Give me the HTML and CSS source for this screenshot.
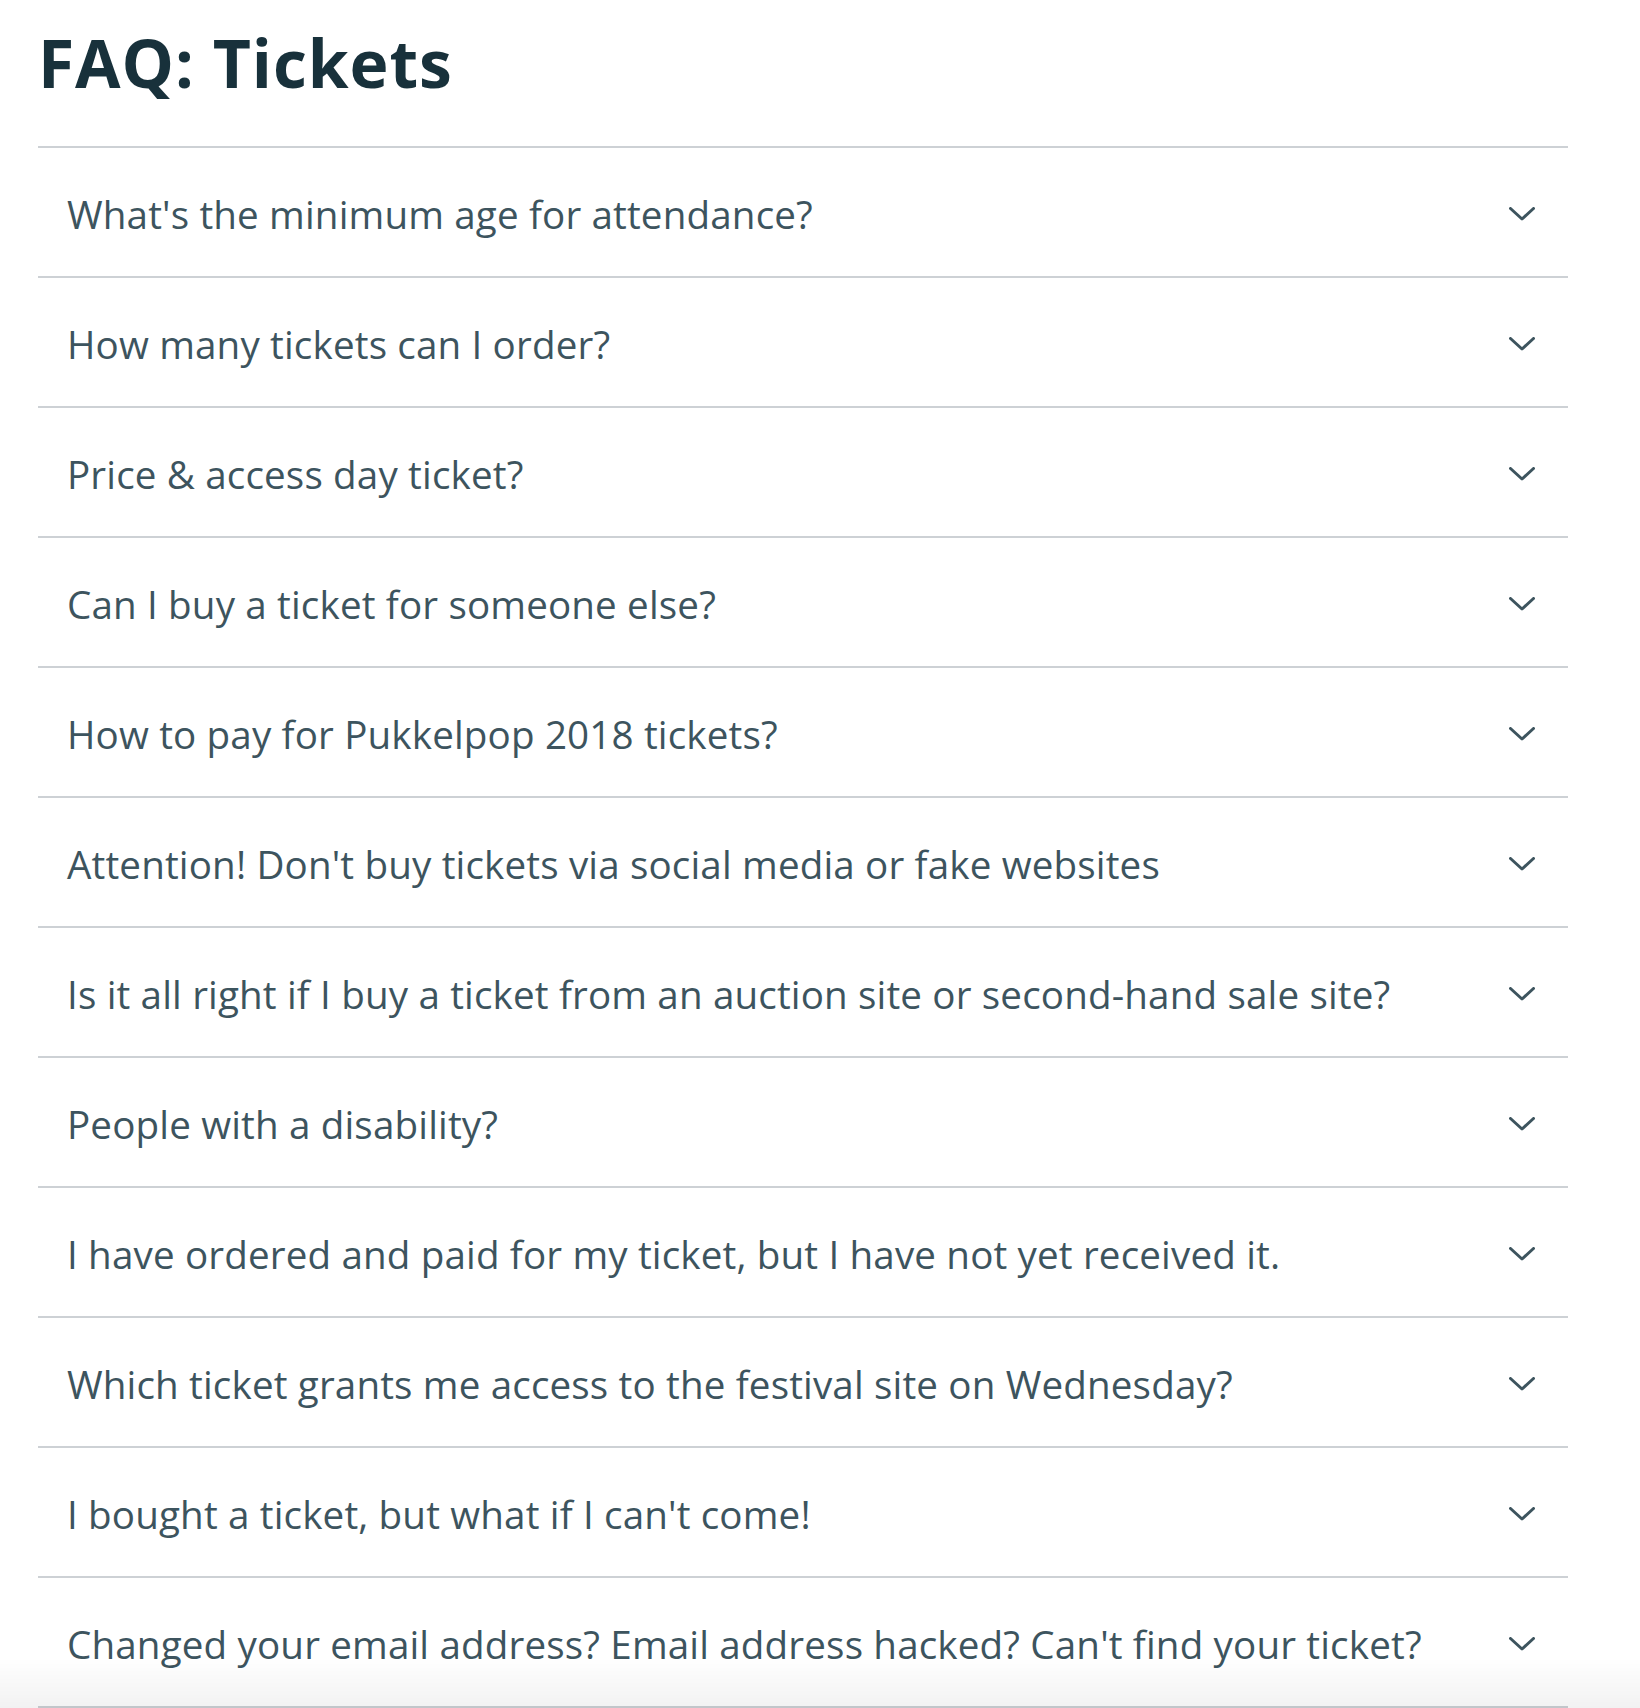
FILE: index.html
```html
<!DOCTYPE html>
<html lang="en">
<head>
<meta charset="utf-8">
<title>FAQ: Tickets</title>
<link rel="stylesheet" href="styles.css">
</head>
<body>
<main class="page">
  <h1 class="title">FAQ: Tickets</h1>
  <ul class="faq">
    <li class="item"><span class="q">What's the minimum age for attendance?</span><svg class="chev" viewBox="0 0 26 14"><path d="M1.5 1.5 L13 12 L24.5 1.5"/></svg></li>
    <li class="item"><span class="q">How many tickets can I order?</span><svg class="chev" viewBox="0 0 26 14"><path d="M1.5 1.5 L13 12 L24.5 1.5"/></svg></li>
    <li class="item"><span class="q">Price &amp; access day ticket?</span><svg class="chev" viewBox="0 0 26 14"><path d="M1.5 1.5 L13 12 L24.5 1.5"/></svg></li>
    <li class="item"><span class="q">Can I buy a ticket for someone else?</span><svg class="chev" viewBox="0 0 26 14"><path d="M1.5 1.5 L13 12 L24.5 1.5"/></svg></li>
    <li class="item"><span class="q">How to pay for Pukkelpop 2018 tickets?</span><svg class="chev" viewBox="0 0 26 14"><path d="M1.5 1.5 L13 12 L24.5 1.5"/></svg></li>
    <li class="item"><span class="q">Attention! Don't buy tickets via social media or fake websites</span><svg class="chev" viewBox="0 0 26 14"><path d="M1.5 1.5 L13 12 L24.5 1.5"/></svg></li>
    <li class="item"><span class="q">Is it all right if I buy a ticket from an auction site or second-hand sale site?</span><svg class="chev" viewBox="0 0 26 14"><path d="M1.5 1.5 L13 12 L24.5 1.5"/></svg></li>
    <li class="item"><span class="q">People with a disability?</span><svg class="chev" viewBox="0 0 26 14"><path d="M1.5 1.5 L13 12 L24.5 1.5"/></svg></li>
    <li class="item"><span class="q">I have ordered and paid for my ticket, but I have not yet received it.</span><svg class="chev" viewBox="0 0 26 14"><path d="M1.5 1.5 L13 12 L24.5 1.5"/></svg></li>
    <li class="item"><span class="q">Which ticket grants me access to the festival site on Wednesday?</span><svg class="chev" viewBox="0 0 26 14"><path d="M1.5 1.5 L13 12 L24.5 1.5"/></svg></li>
    <li class="item"><span class="q">I bought a ticket, but what if I can't come!</span><svg class="chev" viewBox="0 0 26 14"><path d="M1.5 1.5 L13 12 L24.5 1.5"/></svg></li>
    <li class="item"><span class="q">Changed your email address? Email address hacked? Can't find your ticket?</span><svg class="chev" viewBox="0 0 26 14"><path d="M1.5 1.5 L13 12 L24.5 1.5"/></svg></li>
  </ul>
</main>
<div class="fade"></div>
</body>
</html>
```
FILE: styles.css
```css
html, body {
  margin: 0;
  padding: 0;
  background: #ffffff;
}
body {
  font-family: "Open Sans", "Noto Sans", sans-serif;
  overflow: hidden;
}
.page {
  width: 1530px;
  padding-left: 38px;
}
.title {
  margin: 0;
  padding-top: 29px;
  height: 146px;
  box-sizing: border-box;
  font-size: 66px;
  line-height: 1;
  font-weight: 700;
  color: #18313b;
  letter-spacing: 0.9px;
}
.faq {
  list-style: none;
  margin: 0;
  padding: 0;
  border-bottom: 2px solid #cdd1d5;
}
.item {
  display: flex;
  align-items: center;
  justify-content: space-between;
  border-top: 2px solid #cdd1d5;
  padding: 4px 33px 0 29px;
  height: 124px;
}
.q {
  font-size: 38.6px;
  color: #3d545e;
  letter-spacing: 0.15px;
}
.chev {
  width: 26px;
  height: 14px;
  margin-top: -1px;
  fill: none;
  stroke: #3d545e;
  stroke-width: 3;
  stroke-linecap: round;
  stroke-linejoin: round;
}
.fade {
  position: fixed;
  left: 0;
  right: 0;
  bottom: 0;
  height: 50px;
  background: linear-gradient(to bottom, rgba(0,0,0,0), rgba(0,0,0,0.05));
  pointer-events: none;
}
```
